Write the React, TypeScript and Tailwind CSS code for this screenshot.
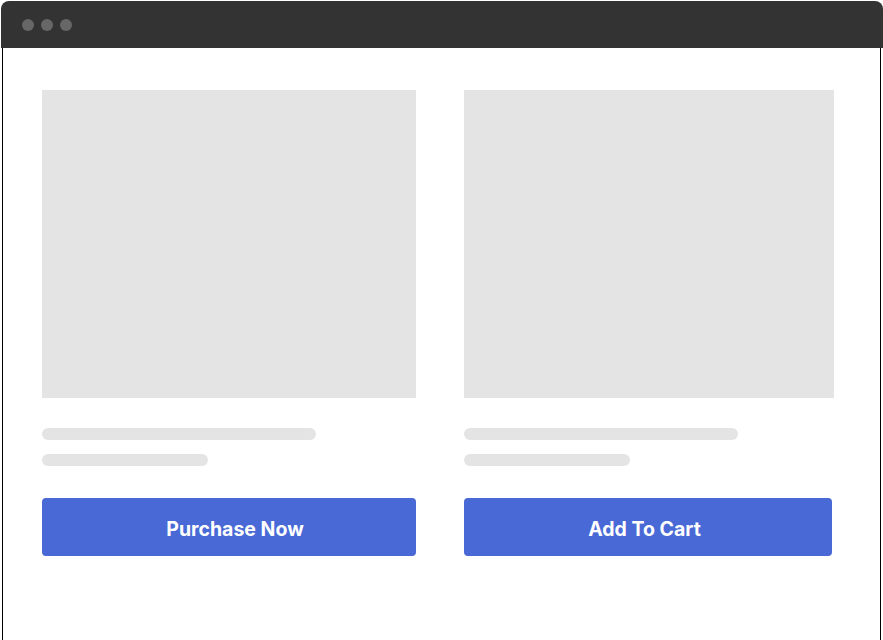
export default function App() {
  return (
    <div className="w-[883px] h-[640px] bg-white overflow-hidden pt-[1px]" style={{ fontFamily: "Inter, 'Noto Sans', sans-serif" }}>
      <div className="ml-[1px] w-[882px] h-[47px] bg-[#333333] rounded-t-[8px] flex items-center pl-[21px] gap-[7px]">
        <div className="w-[12px] h-[12px] rounded-full bg-[#676767]" />
        <div className="w-[12px] h-[12px] rounded-full bg-[#676767]" />
        <div className="w-[12px] h-[12px] rounded-full bg-[#676767]" />
      </div>
      <div className="ml-[2px] w-[879px] h-[600px] border-x border-black pl-[39px] pt-[42px] flex gap-[48px]">
        <div className="flex flex-col w-[374px]">
          <div className="w-[374px] h-[308px] bg-[#e4e4e4]" />
          <div className="mt-[30px] w-[274px] h-[12px] rounded-full bg-[#e4e4e4]" />
          <div className="mt-[14px] w-[166px] h-[12px] rounded-full bg-[#e4e4e4]" />
          <button className="mt-[32px] w-[374px] h-[58px] rounded-[4px] bg-[#4869d6] text-white text-[19.5px] font-bold flex items-center justify-center pt-[5px] pl-[12px]">
            Purchase Now
          </button>
        </div>
        <div className="flex flex-col w-[370px]">
          <div className="w-[370px] h-[308px] bg-[#e4e4e4]" />
          <div className="mt-[30px] w-[274px] h-[12px] rounded-full bg-[#e4e4e4]" />
          <div className="mt-[14px] w-[166px] h-[12px] rounded-full bg-[#e4e4e4]" />
          <button className="mt-[32px] w-[368px] h-[58px] rounded-[4px] bg-[#4869d6] text-white text-[19.5px] font-bold flex items-center justify-center pt-[5px] pr-[7px]">
            Add To Cart
          </button>
        </div>
      </div>
    </div>
  );
}
